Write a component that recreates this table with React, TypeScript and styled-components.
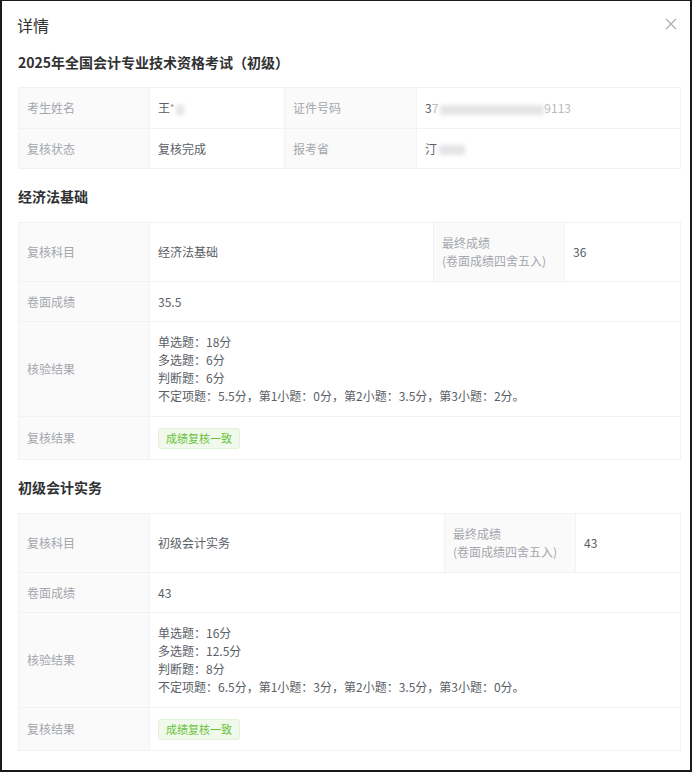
import React from "react";
import styled, { createGlobalStyle } from "styled-components";

const GlobalStyle = createGlobalStyle`
  html, body {
    margin: 0;
    padding: 0;
    background: #fff;
  }
  body {
    font-family: "Noto Sans CJK SC", "Noto Sans", sans-serif;
  }
`;

const Frame = styled.div`
  width: 692px;
  height: 772px;
  box-sizing: border-box;
  border: 2px solid #1a1a1a;
  border-top-width: 1px;
  background: #fff;
  overflow: hidden;
`;

const Header = styled.div`
  display: flex;
  align-items: center;
  justify-content: space-between;
  padding: 12px 12px 0 15px;
  height: 24px;
`;

const DialogTitle = styled.div`
  font-size: 16px;
  line-height: 24px;
  color: #303133;
`;

const Close = styled.button`
  display: flex;
  align-items: center;
  justify-content: center;
  width: 14px;
  height: 14px;
  padding: 0;
  border: none;
  background: none;
  margin-top: -3px;
`;

const Body = styled.div`
  padding: 15px 9px 0 16px;
`;

const ExamTitle = styled.div`
  font-size: 14px;
  font-weight: 700;
  line-height: 20px;
  color: #303133;
  margin-bottom: 15px;
`;

const SectionTitle = styled.div`
  font-size: 14px;
  font-weight: 700;
  line-height: 20px;
  color: #303133;
  margin: 17px 0 16px;
`;

const Grid = styled.div<{ $columns: string }>`
  display: grid;
  grid-template-columns: ${(p) => p.$columns};
  border-top: 1px solid #f0f2f5;
  border-left: 1px solid #f0f2f5;
`;

const Td = styled.div<{ $label?: boolean; $span?: number }>`
  display: flex;
  align-items: center;
  grid-column: ${(p) => (p.$span ? `span ${p.$span}` : "auto")};
  padding: 11px 8px 10.5px;
  font-size: 12px;
  line-height: 18px;
  color: ${(p) => (p.$label ? "#a4a7ac" : "#5a5e66")};
  background: ${(p) => (p.$label ? "#fafafa" : "#fff")};
  border-right: 1px solid #f0f2f5;
  border-bottom: 1px solid #f0f2f5;
  white-space: nowrap;
`;

const Tag = styled.span`
  display: inline-block;
  height: 21px;
  line-height: 19px;
  padding: 0 7px;
  font-size: 11px;
  color: #67c23a;
  background: #f0f9eb;
  border: 1px solid #e1f3d8;
  border-radius: 3px;
  box-sizing: border-box;
`;

const Blur = styled.span`
  display: inline-block;
  height: 10px;
  vertical-align: middle;
  background: #e4e4e6;
  filter: blur(2px);
  margin-left: 2px;
`;

const Star = styled.span`
  font-size: 9px;
  vertical-align: top;
  color: #888;
`;

const Faint = styled.span`
  color: #b8bbc0;
`;

type Cell = {
  text?: React.ReactNode;
  label?: boolean;
  span?: number;
};

type Section = {
  title: string;
  columns: string;
  rows: Cell[][];
};

const Redacted = ({ w }: { w: number }) => <Blur style={{ width: w }} />;

const Lines = ({ items }: { items: string[] }) => (
  <>
    {items.map((t) => (
      <div key={t}>{t}</div>
    ))}
  </>
);

const sections: Section[] = [
  {
    title: "经济法基础",
    columns: "131px 284px 131px 1fr",
    rows: [
      [
        { text: "复核科目", label: true },
        { text: "经济法基础" },
        { text: <Lines items={["最终成绩", "(卷面成绩四舍五入)"]} />, label: true },
        { text: "36" },
      ],
      [{ text: "卷面成绩", label: true }, { text: "35.5", span: 3 }],
      [
        { text: "核验结果", label: true },
        {
          text: (
            <Lines
              items={[
                "单选题：18分",
                "多选题：6分",
                "判断题：6分",
                "不定项题：5.5分，第1小题：0分，第2小题：3.5分，第3小题：2分。",
              ]}
            />
          ),
          span: 3,
        },
      ],
      [{ text: "复核结果", label: true }, { text: <Tag>成绩复核一致</Tag>, span: 3 }],
    ],
  },
  {
    title: "初级会计实务",
    columns: "131px 295px 131px 1fr",
    rows: [
      [
        { text: "复核科目", label: true },
        { text: "初级会计实务" },
        { text: <Lines items={["最终成绩", "(卷面成绩四舍五入)"]} />, label: true },
        { text: "43" },
      ],
      [{ text: "卷面成绩", label: true }, { text: "43", span: 3 }],
      [
        { text: "核验结果", label: true },
        {
          text: (
            <Lines
              items={[
                "单选题：16分",
                "多选题：12.5分",
                "判断题：8分",
                "不定项题：6.5分，第1小题：3分，第2小题：3.5分，第3小题：0分。",
              ]}
            />
          ),
          span: 3,
        },
      ],
      [{ text: "复核结果", label: true }, { text: <Tag>成绩复核一致</Tag>, span: 3 }],
    ],
  },
];

const baseRows: Cell[][] = [
  [
    { text: "考生姓名", label: true },
    {
      text: (
        <>
          王<Star>*</Star>
          <Redacted w={8} />
        </>
      ),
    },
    { text: "证件号码", label: true },
    {
      text: (
        <>
          3<Faint>7</Faint>
          <Redacted w={104} />
          <Faint>9113</Faint>
        </>
      ),
    },
  ],
  [
    { text: "复核状态", label: true },
    { text: "复核完成" },
    { text: "报考省", label: true },
    {
      text: (
        <>
          汀<Redacted w={26} />
        </>
      ),
    },
  ],
];

const DetailTable = ({ columns, rows }: { columns: string; rows: Cell[][] }) => (
  <Grid $columns={columns}>
    {rows.flat().map((c, i) => (
      <Td key={i} $label={c.label} $span={c.span}>
        <div>{c.text}</div>
      </Td>
    ))}
  </Grid>
);

const App = () => {
  return (
    <>
      <GlobalStyle />
      <Frame>
        <Header>
          <DialogTitle>详情</DialogTitle>
          <Close aria-label="close">
            <svg width="12" height="12" viewBox="0 0 12 12">
              <path d="M1 1L11 11M11 1L1 11" stroke="#a8abb2" strokeWidth="1.1" fill="none" />
            </svg>
          </Close>
        </Header>
        <Body>
          <ExamTitle>2025年全国会计专业技术资格考试（初级）</ExamTitle>
          <DetailTable columns="131px 135px 132px 1fr" rows={baseRows} />
          {sections.map((s) => (
            <React.Fragment key={s.title}>
              <SectionTitle>{s.title}</SectionTitle>
              <DetailTable columns={s.columns} rows={s.rows} />
            </React.Fragment>
          ))}
        </Body>
      </Frame>
    </>
  );
};

export default App;
